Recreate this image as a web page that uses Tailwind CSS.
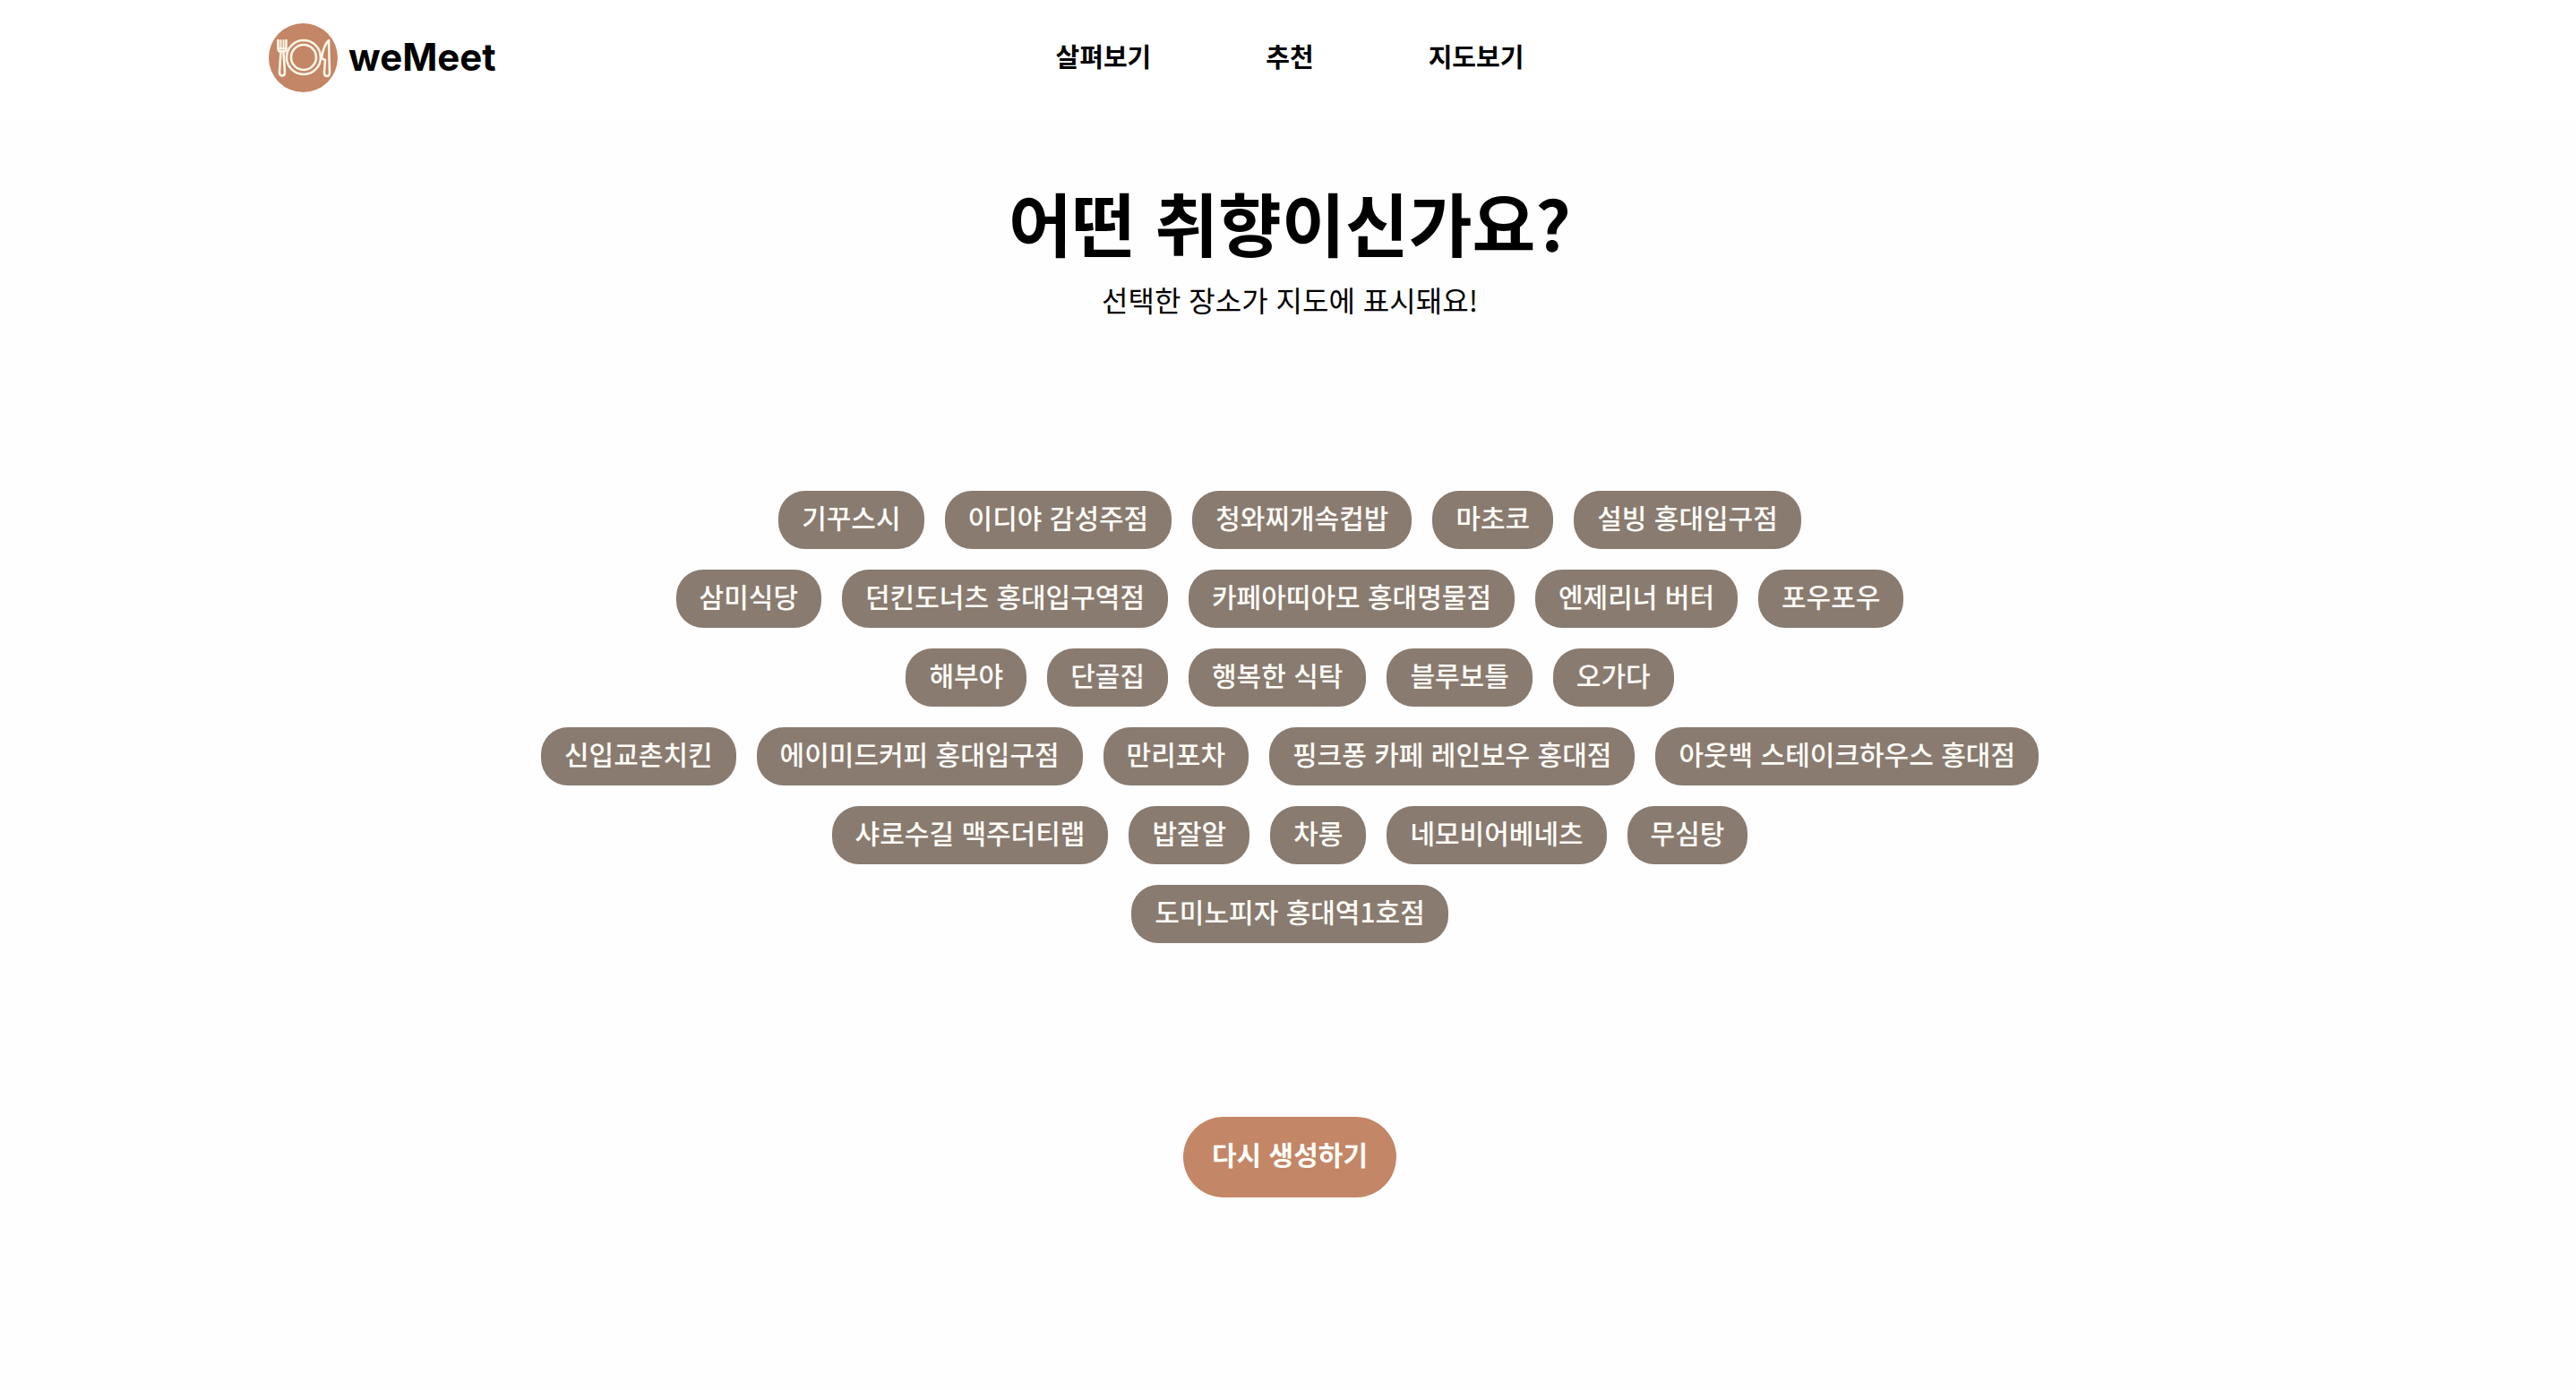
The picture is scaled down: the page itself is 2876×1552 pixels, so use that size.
<!DOCTYPE html>
<html lang="ko">
<head>
<meta charset="utf-8">
<meta name="viewport" content="width=device-width, initial-scale=1">
<title>weMeet</title>
<script src="https://cdn.jsdelivr.net/npm/@tailwindcss/browser@4"></script>
</head>
<body class="min-h-screen pl-1 bg-[#fefefe] text-black font-['Noto_Sans_CJK_KR',sans-serif]">
<header class="-ml-1 pl-75 pr-74 bg-white h-34 pb-2 grid grid-cols-[1fr_auto_1fr] items-center">
  <a href="#" class="flex items-center gap-3 justify-self-start font-['Inter',sans-serif] text-[42px] leading-none font-bold">
    <svg class="size-[77px]" viewBox="0 0 77 77" fill="none" stroke="#fff6e6" stroke-width="2.6" stroke-linecap="round" stroke-linejoin="round" aria-hidden="true">
      <circle cx="38.5" cy="38.5" r="38.5" fill="#c38666" stroke="none"/>
      <circle cx="39" cy="38" r="19"/>
      <circle cx="39" cy="38" r="14"/>
      <path d="M10.500 19v9q0 3 3 4.500l-1.500 22q0 4 3 4t3-4l-1.500-22q3-1.500 3-4.500v-9" fill="#c38666"/>
      <path d="M10.500 28v-9M13.500 29v-10M16.500 29v-10M11 28h8v3h-8z" stroke-width="2"/>
      <path d="M67 19q-6 6-8 20l4 2-1 14q0 4 3 4t3-4z" fill="#c38666"/>
    </svg>
    weMeet
  </a>
  <nav class="flex gap-32 pb-1 text-[29px] leading-10 font-bold">
    <a href="#">살펴보기</a>
    <a href="#">추천</a>
    <a href="#">지도보기</a>
  </nav>
</header>
<main class="flex flex-col items-center pt-16">
  <h1 class="text-[77px] leading-24 font-bold">어떤 취향이신가요?</h1>
  <p class="mt-[14px] text-[32px] leading-12">선택한 장소가 지도에 표시돼요!</p>
  <div id="places" class="mt-[190px] flex flex-col gap-[23px] text-[30px] leading-10 font-medium text-[#fffdf8]"></div>
  <button type="button" class="mt-[194px] h-[90px] px-8 pb-2 rounded-full bg-[#c38666] text-[30px] leading-10 font-bold text-[#fffdf8]">다시 생성하기</button>
</main>
<script>
const rows = [
  ['기꾸스시', '이디야 감성주점', '청와찌개속컵밥', '마초코', '설빙 홍대입구점'],
  ['삼미식당', '던킨도너츠 홍대입구역점', '카페아띠아모 홍대명물점', '엔제리너 버터', '포우포우'],
  ['해부야', '단골집', '행복한 식탁', '블루보틀', '오가다'],
  ['신입교촌치킨', '에이미드커피 홍대입구점', '만리포차', '핑크퐁 카페 레인보우 홍대점', '아웃백 스테이크하우스 홍대점'],
  ['샤로수길 맥주더티랩', '밥잘알', '차롱', '네모비어베네츠', '무심탕'],
  ['도미노피자 홍대역1호점'],
];
document.getElementById('places').innerHTML = rows.map(row =>
  '<div class="flex justify-center gap-[23px]">' + row.map(name =>
    `<button type="button" class="h-[65px] px-[26px] pb-2 rounded-[30px] bg-[#897b70] whitespace-nowrap">${name}</button>`
  ).join('') + '</div>').join('');
</script>
</body>
</html>
